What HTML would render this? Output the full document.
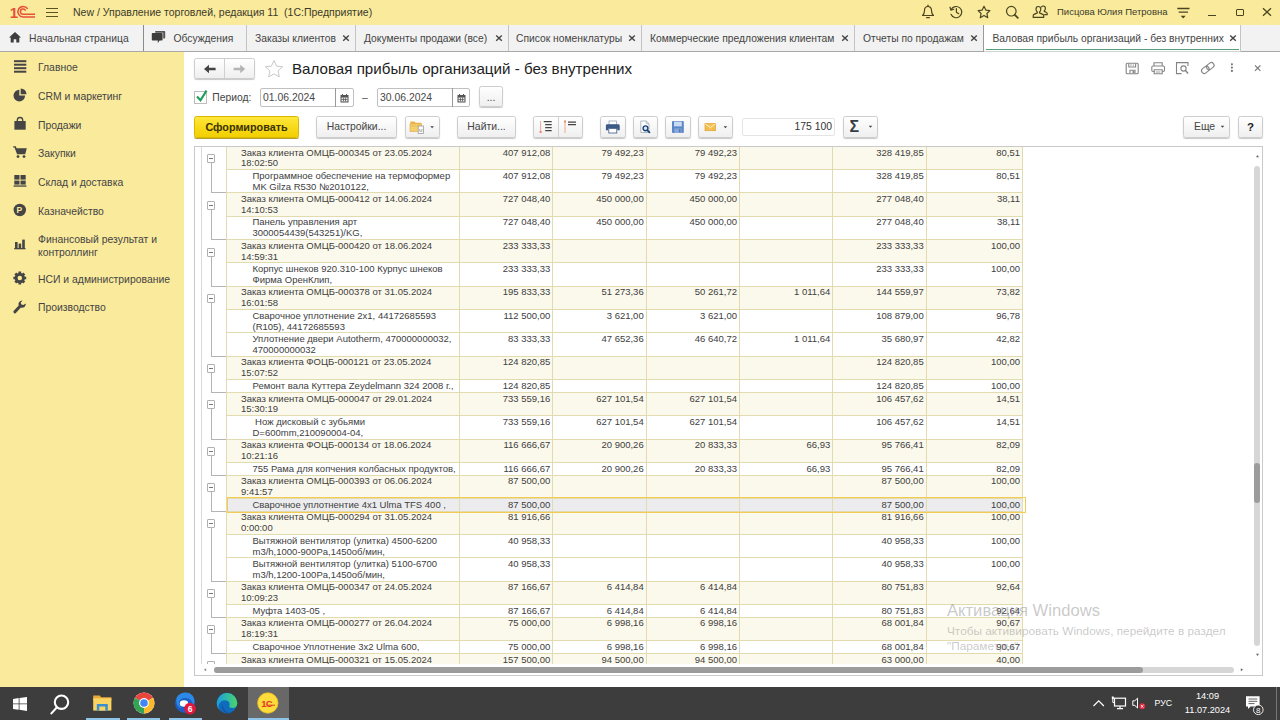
<!DOCTYPE html>
<html lang="ru"><head><meta charset="utf-8"><title>Валовая прибыль организаций - без внутренних</title>
<style>
*{box-sizing:border-box}
html,body{margin:0;padding:0;width:1280px;height:720px;overflow:hidden;background:#fff;font-family:"Liberation Sans",Arial,sans-serif;font-size:10.4px;color:#333}
.abs{position:absolute}
#titlebar{position:absolute;left:0;top:0;width:1280px;height:25px;background:#faea9c}
#titlebar .t{position:absolute;left:73px;top:6px;font-size:10.5px;color:#3a3a2a;white-space:pre}
#tabs{position:absolute;left:0;top:25px;width:1280px;height:27px;background:#f2f2f2;border-bottom:1px solid #a8a8a8}
.tab{position:absolute;top:0;height:26px;border-right:1px solid #c4c4c4;font-size:10.3px;line-height:28px;color:#444;white-space:nowrap}
.tab .x{position:absolute;top:9.400px;width:8px;height:8px}
#side{position:absolute;left:0;top:52px;width:184px;height:635px;background:#faea9c}
.si{position:absolute;left:38px;font-size:10.4px;color:#444;line-height:13px;white-space:nowrap}
.ic{position:absolute;left:11px;width:16px;height:16px}
#taskbar{position:absolute;left:0;top:687px;width:1280px;height:33px;background:#3d3d3d}
.btn{position:absolute;top:116px;height:22px;border:1px solid #cdcdcd;border-radius:2.500px;background:linear-gradient(#ffffff,#efefef);box-shadow:0 1px 1px rgba(0,0,0,.22);font-size:10.4px;line-height:20px;text-align:center;color:#444;white-space:nowrap}
.inp{position:absolute;top:88.400px;height:18.600px;border:1px solid #c0c0c0;border-radius:2px;background:#fff;font-size:10.4px;line-height:18px;padding-left:2px;color:#484848}
#grid{position:absolute;left:194px;top:146px;width:1069px;height:530px;border:1px solid #c9c9c9;background:#fff;overflow:hidden}
#rows{position:absolute;left:31.300px;top:0;width:796.700px;height:517px;overflow:hidden;font-size:9.5px;line-height:10.9px;color:#404040}
.r{position:absolute;left:0;width:796.700px;border-bottom:1px solid #e2dbb0;background:#fff}
.r.g{background:#fbf9ec}
.r.s{background:#ececee}
.r .n{position:absolute;left:0;top:0;width:233.700px;height:100%;padding-top:0.7px;white-space:nowrap;border-right:1px solid #e2dbb0;border-left:1px solid #e2dbb0}
.r .c{position:absolute;top:0;height:100%;text-align:right;padding-right:2px;padding-top:0.7px;border-right:1px solid #e2dbb0}
.bx{position:absolute;left:12px;width:8px;height:9px;border:1px solid #b0b0b0;border-radius:1px;background:#fff}
.bx:after{content:"";position:absolute;left:1px;top:3px;width:4px;height:1px;background:#777}
.vl{position:absolute;left:15.5px;width:1px;background:#b4b4b4}
.hl{position:absolute;left:15.5px;width:17px;height:1px;background:#b4b4b4}
</style></head><body>
<div id="titlebar">
 <svg class="abs" style="left:8px;top:3px" width="30" height="18" viewBox="8 3 30 18"><text x="9.800" y="17.700" font-family="Liberation Sans" font-weight="bold" font-size="15" fill="#e8503a">1</text><g fill="none" stroke="#e8503a" stroke-width="1.550"><path d="M27.700 8.900A5.300 5.300 0 1 0 23.300 17H35"/><path d="M25.500 10.700A2.600 2.600 0 1 0 23.300 14.200H35"/></g></svg>
 <div class="abs" style="left:46px;top:7.8px;width:12.200px;height:1.200px;background:#5a5420"></div>
 <div class="abs" style="left:46px;top:11.8px;width:12.200px;height:1.200px;background:#5a5420"></div>
 <div class="abs" style="left:46px;top:15.8px;width:12.200px;height:1.200px;background:#5a5420"></div>
 <div class="t">New / Управление торговлей, редакция 11  (1С:Предприятие)</div>

 <svg class="abs" style="left:920px;top:4px" width="130" height="18" viewBox="920 4 130 18" fill="none" stroke="#4a4520" stroke-width="1.2" stroke-linejoin="round" stroke-linecap="round">
  <!-- bell -->
  <path d="M922.5 15.5h11c-1.8-1.4-2-3-2-5 0-2.6-1.6-4-3.5-4s-3.500 1.400-3.500 4c0 2-.2 3.600-2 5z"/><path d="M926.6 17.600h2.800"/><path d="M928 5.200v1.200"/>
  <!-- history -->
  <path d="M951.200 9.500a5.600 5.600 0 1 1-.2 4.800"/><path d="M950 7.200l.9 2.900 2.900-.9" /><path d="M956.400 8.500v3.700l2.300 1.500"/>
  <!-- star -->
  <path d="M984 6.300l1.800 3.800 4.100.5-3 2.900.8 4.200-3.700-2.100-3.700 2.100.8-4.200-3-2.900 4.100-.5z"/>
  <!-- search -->
  <circle cx="1011.300" cy="11.200" r="4.800"/><path d="M1014.800 14.800l3 3" stroke-width="1.800"/>
  <!-- users -->
  <path d="M1038.200 6.500c1.500 0 2.600 1.200 2.600 2.800 0 1.200-.5 2.100-1.300 2.700v.9l3.300 1.500c.6.300.9.800.9 1.400v1.600h-10.500v-1.600c0-.6.300-1.100.9-1.400l3.200-1.500v-.9c-.8-.6-1.300-1.500-1.300-2.700 0-1.600 1.100-2.800 2.200-2.800z"/>
  <path d="M1041.500 6.800c.4-.5 1-.8 1.700-.8 1.300 0 2.200 1 2.200 2.400 0 1-.4 1.800-1.100 2.300v.7l2.200 1.100c.5.200.7.600.7 1.100v1.100h-2.500"/>
 </svg>
 <svg class="abs" style="left:1174px;top:4px" width="20" height="18" viewBox="1174 4 20 18" fill="none" stroke="#4a4520" stroke-width="1.300">
  <path d="M1177.300 8.500h12.200M1178.700 12.100h9.300"/><path d="M1180.700 15.800h5l-2.500 2.600z" fill="#4a4520" stroke="none"/>
 </svg>
 <div class="abs" style="left:1208px;top:14.500px;width:7.500px;height:1.300px;background:#4a4520"></div>
 <div class="abs" style="left:1236px;top:8.500px;width:7.500px;height:7.500px;border:1.200px solid #4a4520;border-top-width:1.800px;border-right-width:1.800px;border-radius:1px"></div>
 <svg class="abs" style="left:1262px;top:7px" width="10" height="10" viewBox="0 0 10 10" stroke="#4a4520" stroke-width="1.300"><path d="M1 1.200l8 7.600M9 1.200L1 8.800"/></svg>
 <div class="abs" style="left:1057px;top:6px;font-size:9.5px;color:#3a3a2a;white-space:nowrap">Писцова Юлия Петровна</div>
</div>
<div id="tabs">
 <div class="tab" style="left:0;width:144px;padding-left:29px;border-right-color:#8a8a8a">Начальная страница</div>
 <svg class="abs" style="left:9px;top:7px" width="12" height="11" viewBox="0 0 12 11"><path d="M6 0L0 5.600h1.700V10.500h3V7.200h2.600v3.300h3V5.600H12z" fill="#3d3d3d"/></svg>
 <div class="tab" style="left:144px;width:103px;padding-left:29.500px">Обсуждения</div>
 <svg class="abs" style="left:151px;top:5px" width="15" height="14" viewBox="0 0 15 14"><path d="M4.200 1h9c.6 0 1 .4 1 1v5.500c0 .6-.4 1-1 1h-1V2.800H4.200z" fill="#555"/><path d="M1.800 3h8.800c.6 0 1 .4 1 1v5.600c0 .6-.4 1-1 1H8.500l-1.700 2.600V10.600H1.800c-.6 0-1-.4-1-1V4c0-.6.400-1 1-1z" fill="#3d3d3d"/></svg>
 <div class="tab" style="left:247px;width:109px;padding-left:8px">Заказы клиентов<svg class="x" style="left:95px" viewBox="0 0 8 8"><path d="M1.200 1.500l5.600 5.200M6.800 1.500L1.200 6.700" stroke="#444" stroke-width="1.400" fill="none"/></svg></div>
 <div class="tab" style="left:356px;width:153px;padding-left:8px">Документы продажи (все)<svg class="x" style="left:139px" viewBox="0 0 8 8"><path d="M1.200 1.500l5.600 5.200M6.800 1.500L1.200 6.700" stroke="#444" stroke-width="1.400" fill="none"/></svg></div>
 <div class="tab" style="left:509px;width:133px;padding-left:7px">Список номенклатуры<svg class="x" style="left:118.500px" viewBox="0 0 8 8"><path d="M1.200 1.500l5.600 5.200M6.800 1.500L1.200 6.700" stroke="#444" stroke-width="1.400" fill="none"/></svg></div>
 <div class="tab" style="left:642px;width:213px;padding-left:8px">Коммерческие предложения клиентам<svg class="x" style="left:198.500px" viewBox="0 0 8 8"><path d="M1.200 1.500l5.600 5.200M6.800 1.500L1.200 6.700" stroke="#444" stroke-width="1.400" fill="none"/></svg></div>
 <div class="tab" style="left:855px;width:129px;padding-left:8px;border-right-color:#9a9a9a">Отчеты по продажам<svg class="x" style="left:115px" viewBox="0 0 8 8"><path d="M1.200 1.500l5.600 5.200M6.800 1.500L1.200 6.700" stroke="#444" stroke-width="1.400" fill="none"/></svg></div>
 <div class="tab" style="left:984px;width:257px;padding-left:8.500px;background:#fff;height:27px;border-bottom:1px solid #d4d4d4">Валовая прибыль организаций - без внутренних<svg class="x" style="left:244.500px" viewBox="0 0 8 8"><path d="M1.200 1.500l5.600 5.200M6.800 1.500L1.200 6.700" stroke="#444" stroke-width="1.400" fill="none"/></svg><div class="abs" style="left:2px;top:23.600px;width:253px;height:1.600px;background:#55a079"></div></div>
</div>
<div id="side">
 <svg class="abs" style="left:0;top:0" width="36" height="270" viewBox="0 52 36 270" fill="#454545">
  <!-- main: 4 bars -->
  <rect x="14" y="60.200" width="12.300" height="2"/><rect x="14" y="63.700" width="12.300" height="2"/><rect x="14" y="67.200" width="12.300" height="2"/><rect x="14" y="70.700" width="12.300" height="2"/>
  <!-- pie -->
  <path d="M19.300 89.800a5.800 5.800 0 1 0 5.800 5.800h-5.800z"/><path d="M20.700 88.400v5.800h5.800a5.800 5.800 0 0 0-5.800-5.800z"/>
  <!-- bag -->
  <path d="M14.400 121h11.300v8.700H14.400z"/><path d="M17.300 122.500v-2.300a2.700 2.700 0 0 1 5.400 0v2.300" fill="none" stroke="#454545" stroke-width="1.300"/>
  <!-- cart -->
  <path d="M13.200 146.300h2.600l.8 2h10.200l-1.600 6H17l-.4-1.400-2.100-5.400h-1.300z"/><circle cx="18" cy="156.600" r="1.400"/><circle cx="24" cy="156.600" r="1.400"/>
  <!-- warehouse grid -->
  <rect x="14.300" y="175" width="5.200" height="4.600"/><rect x="20.500" y="175" width="5.200" height="4.600"/><rect x="14.300" y="180.600" width="5.200" height="4"/><rect x="20.500" y="180.600" width="5.200" height="4"/><rect x="13.600" y="185.400" width="12.800" height="1.300"/>
  <!-- coin -->
  <circle cx="19.800" cy="210" r="6.200"/>
  <!-- bars chart -->
  <rect x="15" y="242" width="2.600" height="6.200"/><rect x="18.600" y="243.600" width="2.600" height="4.600"/><rect x="22.200" y="239.600" width="2.600" height="8.600"/><rect x="14.200" y="248" width="11.300" height="1.300"/>
  <!-- gear -->
  <g transform="translate(19.800 278)"><circle r="3.700" fill="none" stroke="#454545" stroke-width="2.900"/><g stroke="#454545" stroke-width="2.700"><path d="M0-6.400v2M0 6.400v-2M-6.400 0h2M6.400 0h-2M-4.500-4.500l1.400 1.400M4.500 4.500l-1.400-1.400M-4.500 4.500l1.400-1.400M4.500-4.500l-1.400 1.400"/></g></g>
  <!-- wrench -->
  <path d="M25.800 303.600a3.700 3.700 0 0 1-4.900 3.900l-4.800 5.300a1.550 1.550 0 0 1-2.300-2.100l4.900-5.200a3.700 3.700 0 0 1 3.700-5l-1.700 2.300.7 1.800 1.900.4z"/>
 </svg>
 <div class="abs" style="left:16.500px;top:152.500px;font-size:8.500px;font-weight:bold;color:#faea9c;line-height:11px">Р</div>

 <div class="si" style="top:9px">Главное</div>
 <div class="si" style="top:38px">CRM и маркетинг</div>
 <div class="si" style="top:67px">Продажи</div>
 <div class="si" style="top:95px">Закупки</div>
 <div class="si" style="top:124px">Склад и доставка</div>
 <div class="si" style="top:153px">Казначейство</div>
 <div class="si" style="top:181px">Финансовый результат и<br>контроллинг</div>
 <div class="si" style="top:221px">НСИ и администрирование</div>
 <div class="si" style="top:249px">Производство</div>
</div>

<!-- header of form -->
<div class="btn" style="left:194px;top:58.300px;width:61px;height:20.400px"></div>
<div class="abs" style="left:224px;top:59.300px;width:1px;height:18.400px;background:#d0d0d0"></div>
<svg class="abs" style="left:203.200px;top:64px" width="14" height="10" viewBox="0 0 14 10"><path d="M1 5l5-4.300v3h6.600v2.600H6v3z" fill="#444"/></svg>
<svg class="abs" style="left:233px;top:64px" width="14" height="10" viewBox="0 0 14 10"><path d="M12.200 5l-5-4.300v3H.6v2.600h6.600v3z" fill="#b4b4b4"/></svg>
<svg class="abs" style="left:264px;top:59px" width="20" height="20" viewBox="0 0 20 20"><path d="M10 1.5l2.6 5.6 6 .7-4.5 4.1 1.2 6L10 14.9 4.7 17.9l1.2-6L1.4 7.8l6-.7z" fill="#fff" stroke="#c8c8c8" stroke-width="1"/></svg>
<div class="abs" style="left:292px;top:60px;font-size:15.150px;line-height:18px;color:#222;white-space:nowrap">Валовая прибыль организаций - без внутренних</div>

<div class="abs" style="left:194.300px;top:91px;width:13px;height:13px;border:1px solid #bdbdbd;background:#fff"></div>
<svg class="abs" style="left:195px;top:89px" width="14" height="14" viewBox="0 0 14 14"><path d="M2 7.600l3.500 3.600 6-9.600" fill="none" stroke="#1d9e57" stroke-width="2.100"/></svg>
<div class="abs" style="left:212.300px;top:91.800px;font-size:10.300px;color:#444">Период:</div>
<div class="inp" style="left:260px;width:94px">01.06.2024</div>
<div class="abs" style="left:335px;top:88.400px;width:1px;height:18.600px;background:#9a9a9a"></div>

<div class="abs" style="left:362px;top:92px;font-size:10.4px;color:#555">–</div>
<div class="inp" style="left:377px;width:93px">30.06.2024</div>
<div class="abs" style="left:452px;top:88.400px;width:1px;height:18.600px;background:#9a9a9a"></div>
<div class="btn" style="left:479px;top:86.300px;width:24px;height:21px;line-height:22px">...</div>

<svg class="abs" style="left:340px;top:93.600px" width="9" height="9" viewBox="0 0 9 9"><rect x=".5" y="1" width="8" height="7.500" fill="#555"/><rect x="1.500" y="3.500" width="6" height="4" fill="#e8e8e8"/><path d="M3.500 3.500v4M5.500 3.500v4M1.500 5.500h6" stroke="#555" stroke-width=".7"/><rect x="2" y="0" width="1" height="2" fill="#555"/><rect x="6" y="0" width="1" height="2" fill="#555"/></svg><svg class="abs" style="left:457px;top:93.600px" width="9" height="9" viewBox="0 0 9 9"><rect x=".5" y="1" width="8" height="7.500" fill="#555"/><rect x="1.500" y="3.500" width="6" height="4" fill="#e8e8e8"/><path d="M3.500 3.500v4M5.500 3.500v4M1.500 5.500h6" stroke="#555" stroke-width=".7"/><rect x="2" y="0" width="1" height="2" fill="#555"/><rect x="6" y="0" width="1" height="2" fill="#555"/></svg>
<div class="btn" style="left:194px;width:105px;background:linear-gradient(#ffe63a,#f2cf00);border-color:#d9b800;font-weight:bold;color:#3a3200;font-size:10.8px;box-shadow:0 1px 0 #b8a030">Сформировать</div>
<div class="btn" style="left:316px;width:81px">Настройки...</div>
<div class="btn" style="left:405px;width:35px"></div>
<div class="btn" style="left:457px;width:59px">Найти...</div>
<div class="btn" style="left:533px;width:50px"></div>
<div class="abs" style="left:558px;top:117px;width:1px;height:20px;background:#d0d0d0"></div>
<div class="btn" style="left:600px;width:26px"></div>
<div class="btn" style="left:633px;width:25px"></div>
<div class="btn" style="left:665px;width:26px"></div>
<div class="btn" style="left:698px;width:35px"></div>
<div class="abs" style="left:742px;top:118px;width:93px;height:18px;border:1px solid #e4e4e4;border-radius:2px;text-align:right;padding-right:2px;font-size:10.4px;line-height:16px;color:#333">175 100</div>
<div class="btn" style="left:843px;width:35px"></div>
<div class="btn" style="left:1183px;width:47px;text-align:left;padding-left:10px">Еще</div>
<div class="btn" style="left:1238px;width:25px;font-weight:bold;font-size:11.5px;color:#222">?</div>


<!-- toolbar icons -->
<svg class="abs" style="left:405px;top:116px" width="36" height="22" viewBox="405 116 36 22">
 <path d="M410.500 121.500h4l1 1.200h5.500v3h-10.500z" fill="#e9b34a"/><path d="M410 123.700h11.500v7.800H410z" fill="#f3cf6e" stroke="#dfa63c" stroke-width=".6"/><path d="M410.500 126h10.500" stroke="#e6b653" stroke-width=".8"/>
 <rect x="418.200" y="126" width="5.300" height="7.400" fill="#fff" stroke="#9a9a9a" stroke-width=".8"/><path d="M419.800 129v2.300h2.100V129" stroke="#888" stroke-width=".7" fill="none"/>
 <path d="M430.300 126.200h3.600l-1.800 2z" fill="#444"/>
</svg>
<svg class="abs" style="left:533px;top:116px" width="50" height="22" viewBox="533 116 50 22">
 <path d="M540.600 121v11.500" stroke="#f0a890" stroke-width="1"/><rect x="539.600" y="131" width="2" height="2" fill="#e58a6a"/>
 <path d="M543.700 121.700h8M545.200 124.700h6.500M545.200 127.700h6.500M545.200 130.700h6.500" stroke="#444" stroke-width="1.300"/>
 <path d="M565 121.500v11.500" stroke="#f0a890" stroke-width="1"/><rect x="564" y="120.500" width="2" height="2" fill="#e58a6a"/>
 <path d="M568 122.200h8M568 124.600h8" stroke="#444" stroke-width="1.300"/>
</svg>
<svg class="abs" style="left:600px;top:116px" width="26" height="22" viewBox="600 116 26 22">
 <rect x="609" y="121" width="7.500" height="4" fill="#fff" stroke="#8a9ab0" stroke-width=".7"/>
 <path d="M607.300 124.300h11c.9 0 1.400.6 1.400 1.400v4.600h-2.400v-2h-9v2h-2.400v-4.600c0-.8.500-1.400 1.400-1.400z" fill="#3b5a86"/>
 <rect x="608.800" y="128.500" width="8" height="4.500" fill="#fff" stroke="#3b5a86" stroke-width=".8"/>
</svg>
<svg class="abs" style="left:633px;top:116px" width="26" height="22" viewBox="633 116 26 22">
 <path d="M640.800 121h5.500l2.700 2.700v8.800h-8.200z" fill="#fff" stroke="#9aa7b8" stroke-width=".8"/><path d="M646.300 121v2.700h2.700" fill="none" stroke="#9aa7b8" stroke-width=".7"/>
 <circle cx="645.500" cy="128.300" r="2.400" fill="#dbe9f7" stroke="#1e4272" stroke-width="1.400"/><path d="M647.300 130.200l2.600 2.600" stroke="#1e4272" stroke-width="1.800"/>
</svg>
<svg class="abs" style="left:665px;top:116px" width="26" height="22" viewBox="665 116 26 22">
 <rect x="672" y="121" width="11.800" height="12" rx="1" fill="#5b86c8"/><rect x="674" y="121.600" width="7.800" height="4.800" fill="#c9daf1"/><rect x="674.300" y="128.500" width="7.200" height="4.500" fill="#89a9da"/><rect x="679" y="129.300" width="1.500" height="3" fill="#4a74b4"/>
</svg>
<svg class="abs" style="left:698px;top:116px" width="36" height="22" viewBox="698 116 36 22">
 <rect x="705" y="123.500" width="10.600" height="7.200" fill="#f4c152" stroke="#e0a030" stroke-width=".7"/><path d="M705.200 123.800l5.100 3.800 5.100-3.800" fill="none" stroke="#fff3d0" stroke-width=".9"/><path d="M705.200 130.500l3.600-3M715.400 130.500l-3.600-3" stroke="#e8ae40" stroke-width=".6"/>
 <path d="M723.600 126.200h3.600l-1.800 2z" fill="#444"/>
</svg>
<div class="abs" style="left:849.500px;top:117px;font-size:16px;font-weight:bold;color:#333d47;line-height:20px">&#x3A3;</div>
<svg class="abs" style="left:868px;top:125px" width="5" height="4" viewBox="0 0 5 4"><path d="M.7.700h3.600l-1.800 2z" fill="#444"/></svg>
<svg class="abs" style="left:1220px;top:125px" width="5" height="4" viewBox="0 0 5 4"><path d="M.7.700h3.600l-1.800 2z" fill="#444"/></svg>
<!-- form right icons -->
<svg class="abs" style="left:1120px;top:58px" width="145" height="20" viewBox="1120 58 145 20" fill="none" stroke="#858585" stroke-width="1.100">
 <rect x="1126.200" y="63.200" width="12" height="10.500" rx="1"/><path d="M1128.800 63.400v3.600h6.800v-3.600"/><path d="M1130 73.500v-3.300h5v3.300"/><rect x="1132.500" y="71" width="1.800" height="2" fill="#858585" stroke="none"/><path d="M1131 64.200v1.800M1133.300 64.200v1.800" stroke-width=".7"/>
 <path d="M1154 66v-3.200h8.200V66"/><rect x="1151.800" y="66" width="12.700" height="5.500" rx="1.200"/><path d="M1154.200 69.800h8v4h-8z" fill="#fff"/><path d="M1155.800 72h4.600" stroke-width=".8"/>
 <path d="M1188 66V62.600h-11.500v11h5"/><circle cx="1183.500" cy="68.500" r="2.600"/><path d="M1185.500 70.600l2.600 2.800" stroke-width="1.500"/>
 <g transform="rotate(-38 1207.800 68)"><rect x="1200.600" y="65.300" width="8.200" height="5.400" rx="2.700"/><rect x="1206.800" y="65.300" width="8.200" height="5.400" rx="2.700"/></g>
 <g fill="#777" stroke="none"><circle cx="1231.900" cy="64.300" r="1.100"/><circle cx="1231.900" cy="67.600" r="1.100"/><circle cx="1231.900" cy="70.900" r="1.100"/></g>
 <path d="M1255 65.400l5.400 5.400M1260.400 65.400l-5.400 5.400" stroke="#777" stroke-width="1.200"/>
</svg>
<div id="grid">
 <div class="abs" style="left:6px;top:0;width:1px;height:517px;background:#d9d9d9"></div>
 <div class="abs" style="left:0;top:0;width:34px;height:517px;overflow:hidden">
 <div class="bx" style="top:7.20px"></div><div class="vl" style="top:16.20px;height:30.26px"></div><div class="hl" style="top:45.46px"></div><div class="bx" style="top:53.86px"></div><div class="vl" style="top:62.86px;height:30.26px"></div><div class="hl" style="top:92.12px"></div><div class="bx" style="top:100.52px"></div><div class="vl" style="top:109.52px;height:30.26px"></div><div class="hl" style="top:138.78px"></div><div class="bx" style="top:147.18px"></div><div class="vl" style="top:156.18px;height:53.59px"></div><div class="hl" style="top:208.77px"></div><div class="bx" style="top:217.17px"></div><div class="vl" style="top:226.17px;height:19.68px"></div><div class="hl" style="top:244.85px"></div><div class="bx" style="top:253.25px"></div><div class="vl" style="top:262.25px;height:30.26px"></div><div class="hl" style="top:291.51px"></div><div class="bx" style="top:299.91px"></div><div class="vl" style="top:308.91px;height:19.68px"></div><div class="hl" style="top:327.59px"></div><div class="bx" style="top:335.99px"></div><div class="vl" style="top:344.99px;height:19.68px"></div><div class="hl" style="top:363.67px"></div><div class="bx" style="top:372.07px"></div><div class="vl" style="top:381.07px;height:53.59px"></div><div class="hl" style="top:433.66px"></div><div class="bx" style="top:442.06px"></div><div class="vl" style="top:451.06px;height:19.68px"></div><div class="hl" style="top:469.74px"></div><div class="bx" style="top:478.14px"></div><div class="vl" style="top:487.14px;height:19.68px"></div><div class="hl" style="top:505.82px"></div><div class="bx" style="top:514.22px"></div><div class="vl" style="top:523.22px;height:6.93px"></div><div class="hl" style="top:529.15px"></div>
 </div>
 <div id="rows">
<div class="r g" style="top:-0.20px;height:23.33px"><div class="n" style="padding-left:13.7px">Заказ клиента ОМЦБ-000345 от 23.05.2024<br>18:02:50</div><div class="c" style="left:233.7px;width:93.3px">407 912,08</div><div class="c" style="left:327px;width:93.4px">79 492,23</div><div class="c" style="left:420.4px;width:93.3px">79 492,23</div><div class="c" style="left:513.7px;width:93.3px"></div><div class="c" style="left:607px;width:93.4px">328 419,85</div><div class="c" style="left:700.4px;width:96.3px">80,51</div></div>
<div class="r" style="top:23.13px;height:23.33px"><div class="n" style="padding-left:25.2px">Программное обеспечение на термоформер<br>MK Gilza R530 №2010122,</div><div class="c" style="left:233.7px;width:93.3px">407 912,08</div><div class="c" style="left:327px;width:93.4px">79 492,23</div><div class="c" style="left:420.4px;width:93.3px">79 492,23</div><div class="c" style="left:513.7px;width:93.3px"></div><div class="c" style="left:607px;width:93.4px">328 419,85</div><div class="c" style="left:700.4px;width:96.3px">80,51</div></div>
<div class="r g" style="top:46.46px;height:23.33px"><div class="n" style="padding-left:13.7px">Заказ клиента ОМЦБ-000412 от 14.06.2024<br>14:10:53</div><div class="c" style="left:233.7px;width:93.3px">727 048,40</div><div class="c" style="left:327px;width:93.4px">450 000,00</div><div class="c" style="left:420.4px;width:93.3px">450 000,00</div><div class="c" style="left:513.7px;width:93.3px"></div><div class="c" style="left:607px;width:93.4px">277 048,40</div><div class="c" style="left:700.4px;width:96.3px">38,11</div></div>
<div class="r" style="top:69.79px;height:23.33px"><div class="n" style="padding-left:25.2px">Панель управления арт<br>3000054439(543251)/KG,</div><div class="c" style="left:233.7px;width:93.3px">727 048,40</div><div class="c" style="left:327px;width:93.4px">450 000,00</div><div class="c" style="left:420.4px;width:93.3px">450 000,00</div><div class="c" style="left:513.7px;width:93.3px"></div><div class="c" style="left:607px;width:93.4px">277 048,40</div><div class="c" style="left:700.4px;width:96.3px">38,11</div></div>
<div class="r g" style="top:93.12px;height:23.33px"><div class="n" style="padding-left:13.7px">Заказ клиента ОМЦБ-000420 от 18.06.2024<br>14:59:31</div><div class="c" style="left:233.7px;width:93.3px">233 333,33</div><div class="c" style="left:327px;width:93.4px"></div><div class="c" style="left:420.4px;width:93.3px"></div><div class="c" style="left:513.7px;width:93.3px"></div><div class="c" style="left:607px;width:93.4px">233 333,33</div><div class="c" style="left:700.4px;width:96.3px">100,00</div></div>
<div class="r" style="top:116.45px;height:23.33px"><div class="n" style="padding-left:25.2px">Корпус шнеков 920.310-100 Курпус шнеков<br>Фирма ОренКлип,</div><div class="c" style="left:233.7px;width:93.3px">233 333,33</div><div class="c" style="left:327px;width:93.4px"></div><div class="c" style="left:420.4px;width:93.3px"></div><div class="c" style="left:513.7px;width:93.3px"></div><div class="c" style="left:607px;width:93.4px">233 333,33</div><div class="c" style="left:700.4px;width:96.3px">100,00</div></div>
<div class="r g" style="top:139.78px;height:23.33px"><div class="n" style="padding-left:13.7px">Заказ клиента ОМЦБ-000378 от 31.05.2024<br>16:01:58</div><div class="c" style="left:233.7px;width:93.3px">195 833,33</div><div class="c" style="left:327px;width:93.4px">51 273,36</div><div class="c" style="left:420.4px;width:93.3px">50 261,72</div><div class="c" style="left:513.7px;width:93.3px">1 011,64</div><div class="c" style="left:607px;width:93.4px">144 559,97</div><div class="c" style="left:700.4px;width:96.3px">73,82</div></div>
<div class="r" style="top:163.11px;height:23.33px"><div class="n" style="padding-left:25.2px">Сварочное уплотнение 2х1, 44172685593<br>(R105), 44172685593</div><div class="c" style="left:233.7px;width:93.3px">112 500,00</div><div class="c" style="left:327px;width:93.4px">3 621,00</div><div class="c" style="left:420.4px;width:93.3px">3 621,00</div><div class="c" style="left:513.7px;width:93.3px"></div><div class="c" style="left:607px;width:93.4px">108 879,00</div><div class="c" style="left:700.4px;width:96.3px">96,78</div></div>
<div class="r" style="top:186.44px;height:23.33px"><div class="n" style="padding-left:25.2px">Уплотнение двери Autotherm, 470000000032,<br>470000000032</div><div class="c" style="left:233.7px;width:93.3px">83 333,33</div><div class="c" style="left:327px;width:93.4px">47 652,36</div><div class="c" style="left:420.4px;width:93.3px">46 640,72</div><div class="c" style="left:513.7px;width:93.3px">1 011,64</div><div class="c" style="left:607px;width:93.4px">35 680,97</div><div class="c" style="left:700.4px;width:96.3px">42,82</div></div>
<div class="r g" style="top:209.77px;height:23.33px"><div class="n" style="padding-left:13.7px">Заказ клиента ФОЦБ-000121 от 23.05.2024<br>15:07:52</div><div class="c" style="left:233.7px;width:93.3px">124 820,85</div><div class="c" style="left:327px;width:93.4px"></div><div class="c" style="left:420.4px;width:93.3px"></div><div class="c" style="left:513.7px;width:93.3px"></div><div class="c" style="left:607px;width:93.4px">124 820,85</div><div class="c" style="left:700.4px;width:96.3px">100,00</div></div>
<div class="r" style="top:233.10px;height:12.75px"><div class="n" style="padding-left:25.2px">Ремонт вала Куттера Zeydelmann 324 2008 г.,</div><div class="c" style="left:233.7px;width:93.3px">124 820,85</div><div class="c" style="left:327px;width:93.4px"></div><div class="c" style="left:420.4px;width:93.3px"></div><div class="c" style="left:513.7px;width:93.3px"></div><div class="c" style="left:607px;width:93.4px">124 820,85</div><div class="c" style="left:700.4px;width:96.3px">100,00</div></div>
<div class="r g" style="top:245.85px;height:23.33px"><div class="n" style="padding-left:13.7px">Заказ клиента ОМЦБ-000047 от 29.01.2024<br>15:30:19</div><div class="c" style="left:233.7px;width:93.3px">733 559,16</div><div class="c" style="left:327px;width:93.4px">627 101,54</div><div class="c" style="left:420.4px;width:93.3px">627 101,54</div><div class="c" style="left:513.7px;width:93.3px"></div><div class="c" style="left:607px;width:93.4px">106 457,62</div><div class="c" style="left:700.4px;width:96.3px">14,51</div></div>
<div class="r" style="top:269.18px;height:23.33px"><div class="n" style="padding-left:25.2px">&nbsp;Нож дисковый с зубьями<br>D=600mm,210090004-04,</div><div class="c" style="left:233.7px;width:93.3px">733 559,16</div><div class="c" style="left:327px;width:93.4px">627 101,54</div><div class="c" style="left:420.4px;width:93.3px">627 101,54</div><div class="c" style="left:513.7px;width:93.3px"></div><div class="c" style="left:607px;width:93.4px">106 457,62</div><div class="c" style="left:700.4px;width:96.3px">14,51</div></div>
<div class="r g" style="top:292.51px;height:23.33px"><div class="n" style="padding-left:13.7px">Заказ клиента ФОЦБ-000134 от 18.06.2024<br>10:21:16</div><div class="c" style="left:233.7px;width:93.3px">116 666,67</div><div class="c" style="left:327px;width:93.4px">20 900,26</div><div class="c" style="left:420.4px;width:93.3px">20 833,33</div><div class="c" style="left:513.7px;width:93.3px">66,93</div><div class="c" style="left:607px;width:93.4px">95 766,41</div><div class="c" style="left:700.4px;width:96.3px">82,09</div></div>
<div class="r" style="top:315.84px;height:12.75px"><div class="n" style="padding-left:25.2px">755 Рама для копчения колбасных продуктов,</div><div class="c" style="left:233.7px;width:93.3px">116 666,67</div><div class="c" style="left:327px;width:93.4px">20 900,26</div><div class="c" style="left:420.4px;width:93.3px">20 833,33</div><div class="c" style="left:513.7px;width:93.3px">66,93</div><div class="c" style="left:607px;width:93.4px">95 766,41</div><div class="c" style="left:700.4px;width:96.3px">82,09</div></div>
<div class="r g" style="top:328.59px;height:23.33px"><div class="n" style="padding-left:13.7px">Заказ клиента ОМЦБ-000393 от 06.06.2024<br>9:41:57</div><div class="c" style="left:233.7px;width:93.3px">87 500,00</div><div class="c" style="left:327px;width:93.4px"></div><div class="c" style="left:420.4px;width:93.3px"></div><div class="c" style="left:513.7px;width:93.3px"></div><div class="c" style="left:607px;width:93.4px">87 500,00</div><div class="c" style="left:700.4px;width:96.3px">100,00</div></div>
<div class="r s" style="top:351.92px;height:12.75px"><div class="n" style="padding-left:25.2px">Сварочное уплотнентие 4х1 Ulma TFS 400 ,</div><div class="c" style="left:233.7px;width:93.3px">87 500,00</div><div class="c" style="left:327px;width:93.4px"></div><div class="c" style="left:420.4px;width:93.3px"></div><div class="c" style="left:513.7px;width:93.3px"></div><div class="c" style="left:607px;width:93.4px">87 500,00</div><div class="c" style="left:700.4px;width:96.3px">100,00</div></div>
<div class="r g" style="top:364.67px;height:23.33px"><div class="n" style="padding-left:13.7px">Заказ клиента ОМЦБ-000294 от 31.05.2024<br>0:00:00</div><div class="c" style="left:233.7px;width:93.3px">81 916,66</div><div class="c" style="left:327px;width:93.4px"></div><div class="c" style="left:420.4px;width:93.3px"></div><div class="c" style="left:513.7px;width:93.3px"></div><div class="c" style="left:607px;width:93.4px">81 916,66</div><div class="c" style="left:700.4px;width:96.3px">100,00</div></div>
<div class="r" style="top:388.00px;height:23.33px"><div class="n" style="padding-left:25.2px">Вытяжной вентилятор (улитка) 4500-6200<br>m3/h,1000-900Pa,1450об/мин,</div><div class="c" style="left:233.7px;width:93.3px">40 958,33</div><div class="c" style="left:327px;width:93.4px"></div><div class="c" style="left:420.4px;width:93.3px"></div><div class="c" style="left:513.7px;width:93.3px"></div><div class="c" style="left:607px;width:93.4px">40 958,33</div><div class="c" style="left:700.4px;width:96.3px">100,00</div></div>
<div class="r" style="top:411.33px;height:23.33px"><div class="n" style="padding-left:25.2px">Вытяжной вентилятор (улитка) 5100-6700<br>m3/h,1200-100Pa,1450об/мин,</div><div class="c" style="left:233.7px;width:93.3px">40 958,33</div><div class="c" style="left:327px;width:93.4px"></div><div class="c" style="left:420.4px;width:93.3px"></div><div class="c" style="left:513.7px;width:93.3px"></div><div class="c" style="left:607px;width:93.4px">40 958,33</div><div class="c" style="left:700.4px;width:96.3px">100,00</div></div>
<div class="r g" style="top:434.66px;height:23.33px"><div class="n" style="padding-left:13.7px">Заказ клиента ОМЦБ-000347 от 24.05.2024<br>10:09:23</div><div class="c" style="left:233.7px;width:93.3px">87 166,67</div><div class="c" style="left:327px;width:93.4px">6 414,84</div><div class="c" style="left:420.4px;width:93.3px">6 414,84</div><div class="c" style="left:513.7px;width:93.3px"></div><div class="c" style="left:607px;width:93.4px">80 751,83</div><div class="c" style="left:700.4px;width:96.3px">92,64</div></div>
<div class="r" style="top:457.99px;height:12.75px"><div class="n" style="padding-left:25.2px">Муфта 1403-05 ,</div><div class="c" style="left:233.7px;width:93.3px">87 166,67</div><div class="c" style="left:327px;width:93.4px">6 414,84</div><div class="c" style="left:420.4px;width:93.3px">6 414,84</div><div class="c" style="left:513.7px;width:93.3px"></div><div class="c" style="left:607px;width:93.4px">80 751,83</div><div class="c" style="left:700.4px;width:96.3px">92,64</div></div>
<div class="r g" style="top:470.74px;height:23.33px"><div class="n" style="padding-left:13.7px">Заказ клиента ОМЦБ-000277 от 26.04.2024<br>18:19:31</div><div class="c" style="left:233.7px;width:93.3px">75 000,00</div><div class="c" style="left:327px;width:93.4px">6 998,16</div><div class="c" style="left:420.4px;width:93.3px">6 998,16</div><div class="c" style="left:513.7px;width:93.3px"></div><div class="c" style="left:607px;width:93.4px">68 001,84</div><div class="c" style="left:700.4px;width:96.3px">90,67</div></div>
<div class="r" style="top:494.07px;height:12.75px"><div class="n" style="padding-left:25.2px">Сварочное Уплотнение 3х2 Ulma 600,</div><div class="c" style="left:233.7px;width:93.3px">75 000,00</div><div class="c" style="left:327px;width:93.4px">6 998,16</div><div class="c" style="left:420.4px;width:93.3px">6 998,16</div><div class="c" style="left:513.7px;width:93.3px"></div><div class="c" style="left:607px;width:93.4px">68 001,84</div><div class="c" style="left:700.4px;width:96.3px">90,67</div></div>
<div class="r g" style="top:506.82px;height:23.33px"><div class="n" style="padding-left:13.7px">Заказ клиента ОМЦБ-000321 от 15.05.2024</div><div class="c" style="left:233.7px;width:93.3px">157 500,00</div><div class="c" style="left:327px;width:93.4px">94 500,00</div><div class="c" style="left:420.4px;width:93.3px">94 500,00</div><div class="c" style="left:513.7px;width:93.3px"></div><div class="c" style="left:607px;width:93.4px">63 000,00</div><div class="c" style="left:700.4px;width:96.3px">40,00</div></div>
 </div>
 <div class="abs" style="left:31.500px;top:349.900px;width:799px;height:16.200px;border:1.600px solid #f3cb55;z-index:4"></div>
 <!-- scrollbars -->
 <svg class="abs" style="left:1059px;top:6px" width="7" height="6" viewBox="0 0 7 6"><path d="M2 4.300h3l-1.500-2.300z" fill="#666"/></svg>
 <svg class="abs" style="left:1059px;top:505px" width="7" height="6" viewBox="0 0 7 6"><path d="M2 1.800h3l-1.500 2.300z" fill="#666"/></svg>
 <svg class="abs" style="left:7px;top:519px" width="6" height="7" viewBox="0 0 6 7"><path d="M4.200 2.300v3l-2.300-1.500z" fill="#888"/></svg>
 <svg class="abs" style="left:1044px;top:519px" width="6" height="7" viewBox="0 0 6 7"><path d="M1.800 2.300v3l2.300-1.500z" fill="#666"/></svg>

 <div class="abs" style="left:1059px;top:19px;width:6px;height:480px;border-radius:3px;background:#d6d6d6"></div>
 <div class="abs" style="left:1059px;top:316px;width:6px;height:40px;border-radius:3px;background:#9c9c9c"></div>
 <div class="abs" style="left:18.500px;top:519.600px;width:1020px;height:6.300px;border-radius:3px;background:#d6d6d6"></div>
 <div class="abs" style="left:18.500px;top:519.600px;width:929px;height:6.300px;border-radius:3px;background:#9c9c9c"></div>
</div>

<!-- watermark -->
<div class="abs" style="left:947px;top:601.200px;font-size:16.600px;color:rgba(135,135,135,.45);white-space:nowrap;z-index:9">Активация Windows</div>
<div class="abs" style="left:947px;top:623.800px;font-size:11.800px;line-height:15px;color:rgba(135,135,135,.45);white-space:nowrap;z-index:9">Чтобы активировать Windows, перейдите в раздел<br>"Параметры".</div>

<div id="taskbar">
 <div class="abs" style="left:248px;top:0;width:41px;height:33px;background:#686868"></div>
 <div class="abs" style="left:86px;top:31px;width:34px;height:2px;background:#8ec3ea"></div>
 <div class="abs" style="left:127px;top:31px;width:33px;height:2px;background:#8ec3ea"></div>
 <div class="abs" style="left:169px;top:31px;width:33px;height:2px;background:#8ec3ea"></div>
 <div class="abs" style="left:248px;top:31px;width:41px;height:2px;background:#8ec3ea"></div>

 <!-- windows logo -->
 <svg class="abs" style="left:12px;top:9px" width="16" height="16" viewBox="0 0 16 16" fill="#fff"><path d="M1 2.900l5.700-.8v5.400H1zM7.500 2l7.500-1.100v6.600H7.500zM1 8.300h5.700v5.400L1 12.900zM7.500 8.300H15v6.600l-7.500-1.100z"/></svg>
 <!-- search -->
 <svg class="abs" style="left:48px;top:6px" width="24" height="22" viewBox="48 692 24 22" fill="none" stroke="#fff" stroke-width="2.100"><circle cx="61.500" cy="701.200" r="6.700"/><path d="M57 706.300l-5.600 6.100" stroke-linecap="round"/></svg>
 <!-- explorer -->
 <svg class="abs" style="left:92px;top:7px" width="21" height="18" viewBox="92 694 21 18"><path d="M93.200 695.500h6.500l1.500 1.800h10.200v3H93.200z" fill="#e9a93a"/><path d="M93.200 698.300h18.200v12.300H93.200z" fill="#f9d462"/><path d="M96.800 704h11v6.600h-11z" fill="#3a8fd0"/><path d="M99.300 706.500h6v4.100h-6z" fill="#f9d462"/></svg>
 <!-- chrome -->
 <svg class="abs" style="left:133px;top:5px" width="22" height="22" viewBox="-11 -11 22 22"><circle r="10.500" fill="#fff"/><path d="M0 0L-9.090-5.250A10.500 10.500 0 0 1 9.090-5.250z" fill="#e8453c"/><path d="M0 0L9.090-5.250A10.500 10.500 0 0 1 0 10.500z" fill="#f9bb2d"/><path d="M0 0L0 10.500A10.500 10.500 0 0 1-9.090-5.250z" fill="#34a353"/><path d="M0-4.800h9.300" stroke="#e8453c" stroke-width="0"/><circle r="4.900" fill="#fff"/><circle r="3.800" fill="#4286f5"/></svg>
 <!-- thunderbird -->
 <svg class="abs" style="left:173px;top:4px" width="26" height="26" viewBox="173 691 26 26"><circle cx="185" cy="703" r="10" fill="#1a5fc4"/><path d="M177 697c3-5 11-6 15-2 3 3 3 8 1 11 0-5-3-8-8-8-3 0-6 2-6 5 0 2 1 4 3 5-4 0-7-5-5-11z" fill="#2b8ae8"/><ellipse cx="184" cy="703.500" rx="4.200" ry="3.200" fill="#fff"/><circle cx="190" cy="708.600" r="5.800" fill="#e3173e"/><text x="190" y="712" font-family="Liberation Sans" font-size="8.500" font-weight="bold" fill="#fff" text-anchor="middle">6</text></svg>
 <!-- edge -->
 <svg class="abs" style="left:215px;top:4px" width="24" height="24" viewBox="215 691 24 24"><defs><linearGradient id="eg" x1="0" y1="0" x2="1" y2="0"><stop offset="0" stop-color="#1b9de2"/><stop offset="1" stop-color="#49d668"/></linearGradient></defs><circle cx="227" cy="703" r="10.300" fill="#0f6cbd"/><path d="M216.800 702a10.300 10.300 0 0 1 20.500 1c0 3-2 5-5 5-2.500 0-3.500-1.200-3-2.500.7-1.500.5-3.500-1.500-4.600-3-1.600-7-.5-8.500 2.600-1 2-1 4 0 6.500-1.700-2-2.700-5-2.500-8z" fill="url(#eg)"/><path d="M224 708c1 3.500 4.500 5.600 8.500 4.500-3 1.600-7 1-9.300-1.500-1.500-1.800-2-4.500-1-6.500.2 1.200.8 2.400 1.800 3.500z" fill="#1657a8"/></svg>
 <!-- 1C -->
 <svg class="abs" style="left:256px;top:4px" width="24" height="24" viewBox="256 691 24 24"><circle cx="267.800" cy="703" r="10.200" fill="#fbdc3c"/><circle cx="267.800" cy="703" r="10.200" fill="none" stroke="#f0c020" stroke-width=".8"/><text x="261.200" y="706.800" font-family="Liberation Sans" font-size="9.500" font-weight="bold" fill="#e03a25" letter-spacing="-.8">1С</text><rect x="267.500" y="704.700" width="7.500" height="1" fill="#e03a25"/></svg>
 <!-- tray -->
 <svg class="abs" style="left:1090px;top:6px" width="60" height="22" viewBox="1090 693 60 22" fill="none" stroke="#fff" stroke-width="1.200"><path d="M1093.500 706l5.200-5.200 5.200 5.200"/><rect x="1114.500" y="698.200" width="11" height="7.800"/><path d="M1117 708.700h6M1120 706v2.700"/><path d="M1112.800 697.500v5h2" stroke-width="1"/><rect x="1111.800" y="696.500" width="2" height="2.500" fill="#fff" stroke="none"/><path d="M1132.800 700.800h2l2.700-2.600v9.800l-2.700-2.600h-2z" stroke-width="1"/><circle cx="1142.200" cy="706.300" r="3" fill="#e8283c" stroke="none"/><path d="M1140.900 705l2.600 2.600M1143.500 705l-2.600 2.600" stroke-width=".9"/></svg>
 <svg class="abs" style="left:1244px;top:7px" width="22" height="24" viewBox="1244 694 22 24"><path d="M1246 696.200h13.600v10.300h-9l-2.600 2.600v-2.600h-2z" fill="#fff"/><path d="M1248.500 699h8.800M1248.500 701.300h8.800M1248.500 703.600h6" stroke="#3a3a3a" stroke-width=".8"/><circle cx="1258.300" cy="709.800" r="4.800" fill="#3a3a3a" stroke="#fff" stroke-width=".9"/><text x="1258.300" y="712.700" font-family="Liberation Sans" font-size="8" fill="#fff" text-anchor="middle">8</text></svg>
 <div class="abs" style="left:1154.500px;top:11px;font-size:8.800px;color:#fff">РУС</div>
 <div class="abs" style="left:1177.500px;top:1.500px;width:60px;text-align:center;font-size:9.200px;color:#fff;line-height:14.900px">14:09<br>11.07.2024</div>
 <div class="abs" style="left:1276px;top:0;width:1px;height:33px;background:#777"></div>
</div>
</body></html>
